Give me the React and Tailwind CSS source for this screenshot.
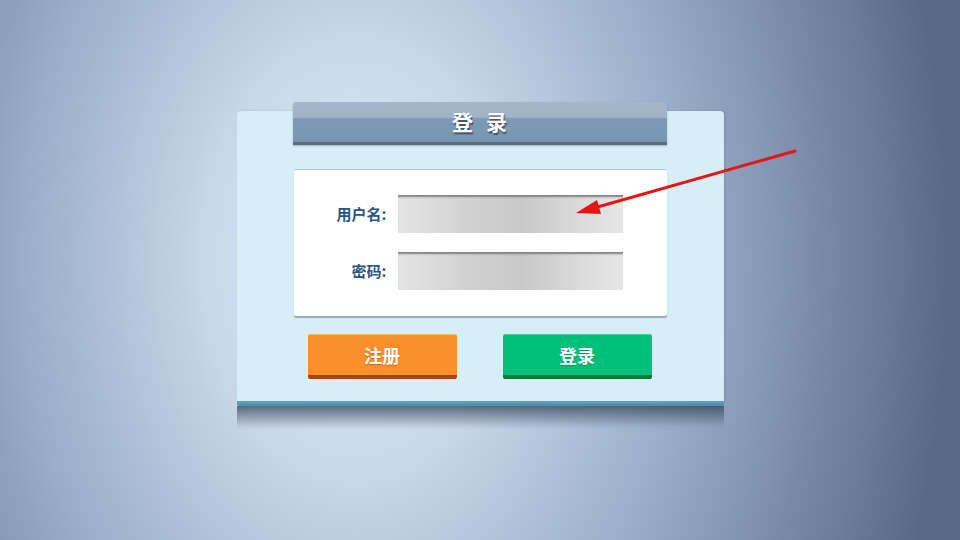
export default function App() {
  const font = { fontFamily: '"Noto Sans CJK SC", "Noto Sans", sans-serif' };
  return (
    <div
      className="relative w-[960px] h-[540px] overflow-hidden bg-[radial-gradient(ellipse_62%_160%_at_37%_48%,#e0ebf5_0%,#cad9ea_24%,#98adc9_56%,#5a6886_100%)]"
      style={font}
    >
      <div className="mx-auto w-[487px] pt-[102px] flex flex-col">
        {/* header tab */}
        <div className="relative z-10 ml-[56px] w-[374px] h-[43px] rounded-t-[3px] border-b-[3px] border-[#5b6f84] bg-[linear-gradient(#a3b6ca_0%,#a0b3c7_38%,#7c9ab6_42%,#7896b2_100%)] flex items-center justify-center shadow-[0_1px_2px_rgba(0,0,0,0.25)]">
          <span className="text-white text-[21px] font-bold tracking-[4px] pl-[4px] [text-shadow:1px_2px_1px_rgba(40,50,70,0.7)]">
            登 录
          </span>
        </div>
        {/* card */}
        <div className="relative -mt-[34px] rounded-t-[4px] bg-[#d6eff6] pt-[58px] pb-[22px] shadow-[1px_0_2px_rgba(60,80,110,0.25)]">
          {/* white panel */}
          <div className="ml-[57px] w-[373px] h-[147px] bg-white border-t border-[#b9c9d3] rounded-[2px] shadow-[0_2px_1px_#9aa8b3] pt-[25px] flex flex-col gap-[19px]">
            <div className="flex items-center h-[38px]">
              <div className="w-[93px] text-right text-[15px] font-bold text-[#2b5383]">用户名:</div>
              <div className="ml-[11px] w-[225px] h-[38px] bg-[linear-gradient(to_right,#e4e4e4_0%,#d2d2d2_30%,#c8c8c8_55%,#dadada_80%,#e6e6e6_100%)] shadow-[inset_0_3px_2px_-1px_#808080]"></div>
            </div>
            <div className="flex items-center h-[38px]">
              <div className="w-[93px] text-right text-[15px] font-bold text-[#2b5383]">密码:</div>
              <div className="ml-[11px] w-[225px] h-[38px] bg-[linear-gradient(to_right,#e4e4e4_0%,#d2d2d2_30%,#c8c8c8_55%,#dadada_80%,#e6e6e6_100%)] shadow-[inset_0_3px_2px_-1px_#808080]"></div>
            </div>
          </div>
          {/* buttons */}
          <div className="mt-[18px] ml-[71px] flex gap-[46px]">
            <button className="w-[149px] h-[45px] rounded-[2px] bg-[#fb8f2b] border-t border-[#fdb35a] border-b-[4px] border-b-[#a3490e] text-white text-[18px] font-bold flex items-center justify-center [text-shadow:0_1px_1px_rgba(120,50,0,0.4)]">
              注册
            </button>
            <button className="w-[149px] h-[45px] rounded-[2px] bg-[#00c07c] border-t border-[#35d597] border-b-[4px] border-b-[#0b7a3a] text-white text-[18px] font-bold flex items-center justify-center [text-shadow:0_1px_1px_rgba(0,80,40,0.4)]">
              登录
            </button>
          </div>
        </div>
        {/* blue strip */}
        <div className="h-[5px] bg-[linear-gradient(#6aa6c4,#4a88a8)] rounded-b-[2px]"></div>
        {/* reflection shadow */}
        <div className="h-[24px] bg-[linear-gradient(rgba(55,68,88,0.75),rgba(120,140,170,0.15)_85%,rgba(160,180,205,0))]"></div>
      </div>

      {/* red arrow */}
      <svg className="absolute left-0 top-0 pointer-events-none" width="960" height="540">
        <line x1="795" y1="151" x2="594" y2="208" stroke="#e81515" strokeWidth="3" strokeLinecap="round" />
        <polygon points="576,213 597,200 601,214" fill="#e81515" />
      </svg>
    </div>
  );
}
